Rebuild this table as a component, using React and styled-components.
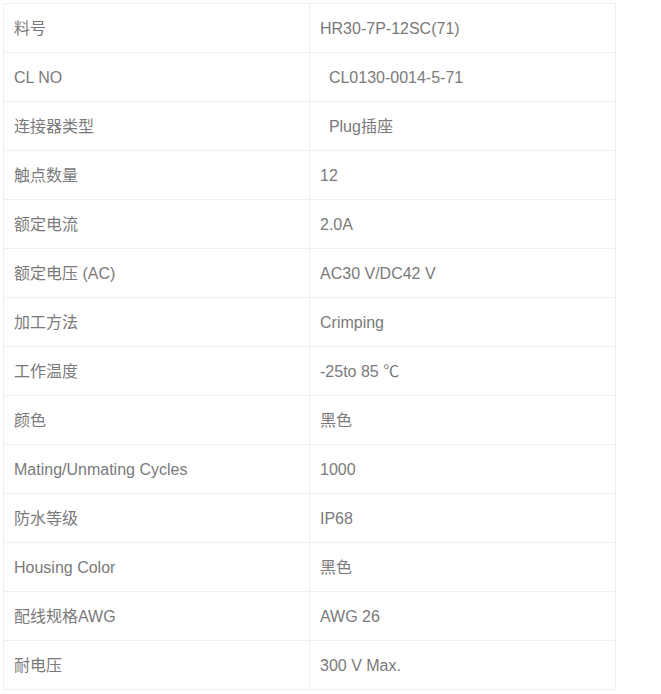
import React from "react";
import styled, { createGlobalStyle } from "styled-components";

const GlobalStyle = createGlobalStyle`
  html, body {
    margin: 0;
    padding: 0;
    background: #ffffff;
  }
  body {
    font-family: "Liberation Sans", Arial, "Noto Sans CJK SC", sans-serif;
  }
`;

const Page = styled.div`
  padding: 3px;
`;

const SpecTable = styled.table`
  width: 613px;
  border-collapse: collapse;
  table-layout: fixed;
  font-family: "Liberation Sans", Arial, "Noto Sans CJK SC", sans-serif;
  font-size: 16px;
  color: #7a7a7a;
`;

const Row = styled.tr``;

const Cell = styled.td`
  height: 46px;
  padding: 2px 10px 0;
  border: 1px solid #eeeeee;
  vertical-align: middle;
  white-space: pre;
  line-height: 20px;
`;

const rows = [
  ["料号", "HR30-7P-12SC(71)"],
  ["CL NO", "\u00a0\u00a0CL0130-0014-5-71"],
  ["连接器类型", "\u00a0\u00a0Plug插座"],
  ["触点数量", "12"],
  ["额定电流", "2.0A"],
  ["额定电压 (AC)", "AC30 V/DC42 V"],
  ["加工方法", "Crimping"],
  ["工作温度", "-25to 85 ℃"],
  ["颜色", "黑色"],
  ["Mating/Unmating Cycles", "1000"],
  ["防水等级", "IP68"],
  ["Housing Color", "黑色"],
  ["配线规格AWG", "AWG 26"],
  ["耐电压", "300 V Max."],
];

export default function App() {
  return (
    <>
      <GlobalStyle />
      <Page>
        <SpecTable>
          <tbody>
            {rows.map(([k, v]) => (
              <Row key={k}>
                <Cell>{k}</Cell>
                <Cell>{v}</Cell>
              </Row>
            ))}
          </tbody>
        </SpecTable>
      </Page>
    </>
  );
}
